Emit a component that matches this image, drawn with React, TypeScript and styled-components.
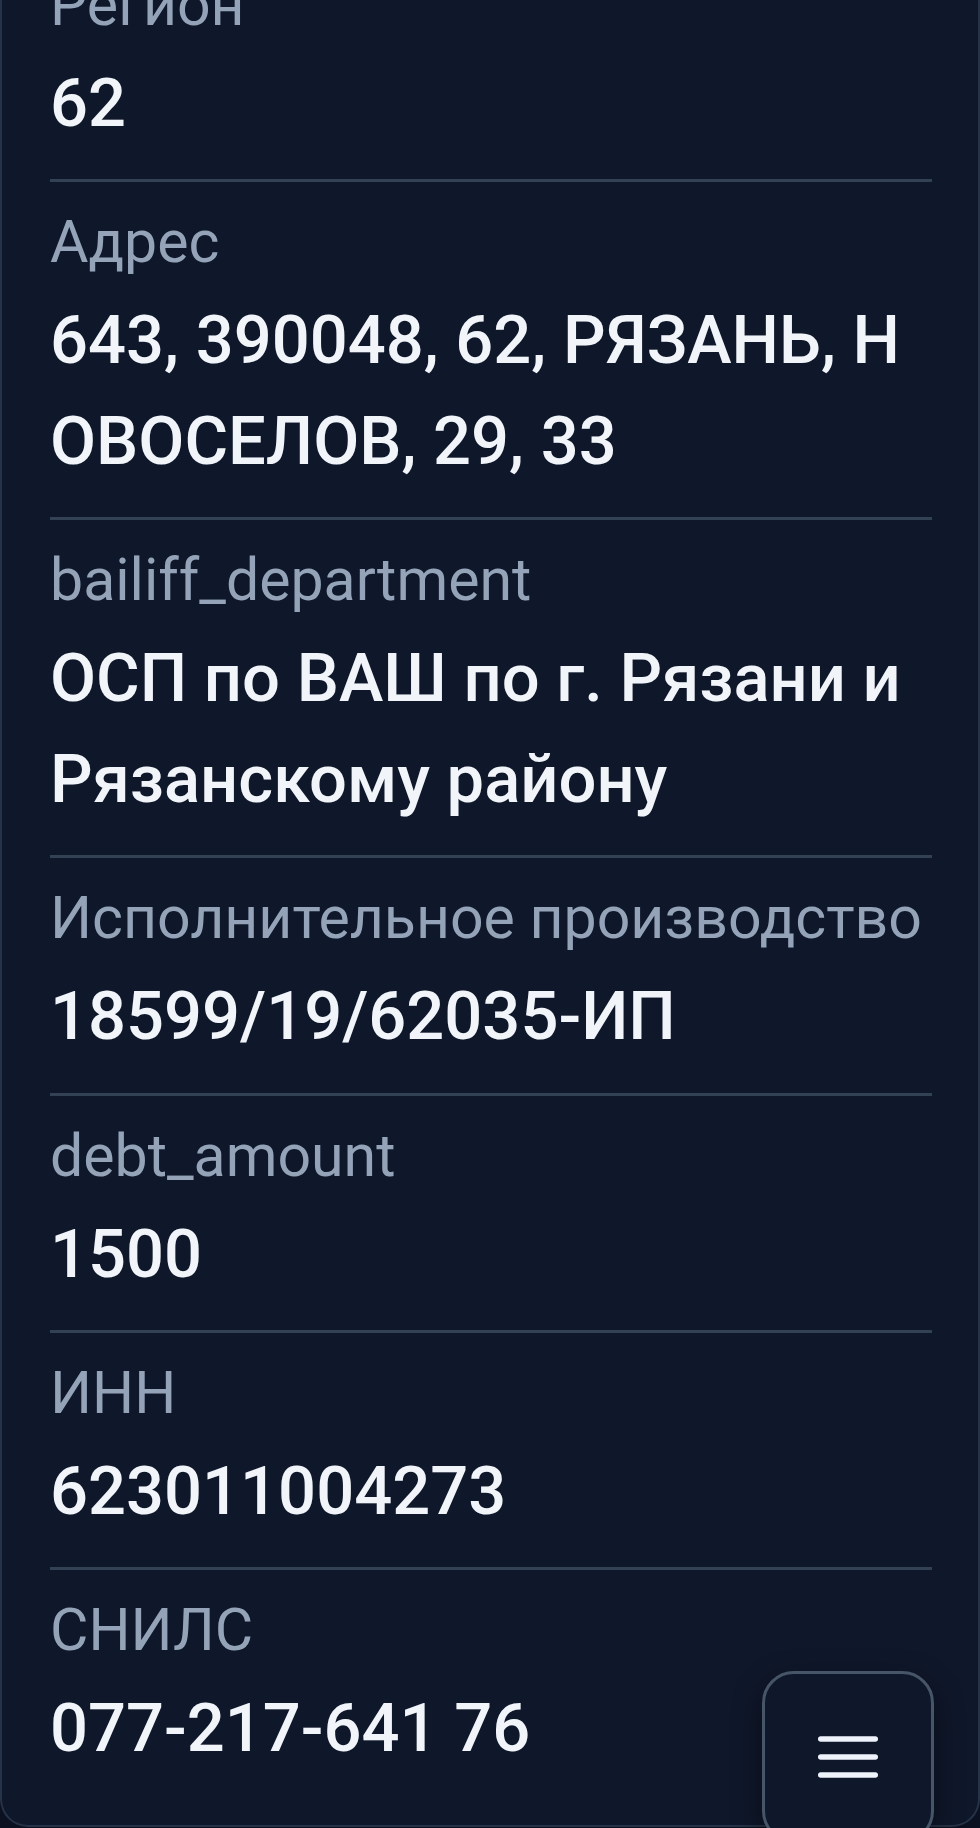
import React from "react";
import styled, { createGlobalStyle } from "styled-components";

const GlobalStyle = createGlobalStyle`
  html, body {
    margin: 0;
    padding: 0;
    background: #0b1120;
    font-family: Roboto, "Noto Sans", "Liberation Sans", sans-serif;
    -webkit-font-smoothing: antialiased;
  }
`;

const Viewport = styled.div`
  height: 100vh;
  overflow: hidden;
`;

const Card = styled.div`
  margin-top: -55px;
  background: #0f172a;
  border: 2px solid #253247;
  border-top: none;
  border-radius: 0 0 28px 28px;
  padding: 0 46px 21px 48px;
`;

const Field = styled.div`
  padding: 18px 0 25px;
  border-bottom: 3px solid #334155;

  &:last-child {
    border-bottom: none;
  }
`;

const Label = styled.div`
  font-size: 59px;
  line-height: 84px;
  font-weight: 400;
  color: #94a3b8;
  white-space: nowrap;
`;

const Value = styled.div`
  margin-top: 6px;
  font-size: 66.9px;
  line-height: 101.1px;
  font-weight: 500;
  color: #f1f5f9;
  word-break: break-all;
`;

const MenuButton = styled.button`
  position: fixed;
  right: 46px;
  bottom: -15px;
  width: 172px;
  height: 172px;
  display: flex;
  align-items: center;
  justify-content: center;
  padding: 0;
  background: #0f172a;
  border: 3px solid #475569;
  border-radius: 32px;
  box-shadow: 0 10px 30px rgba(0, 0, 0, 0.45);
  cursor: pointer;
`;

const fields = [
  { label: "Регион", value: "62" },
  { label: "Адрес", value: "643, 390048, 62, РЯЗАНЬ, НОВОСЕЛОВ, 29, 33" },
  {
    label: "bailiff_department",
    value: "ОСП по ВАШ по г. Рязани и Рязанскому району",
  },
  { label: "Исполнительное производство", value: "18599/19/62035-ИП" },
  { label: "debt_amount", value: "1500" },
  { label: "ИНН", value: "623011004273" },
  { label: "СНИЛС", value: "077-217-641 76" },
];

const HamburgerIcon = () => (
  <svg width="60" height="42" viewBox="0 0 60 42" fill="none">
    {[3, 21, 39].map((y) => (
      <line
        key={y}
        x1="2.75"
        x2="57.25"
        y1={y}
        y2={y}
        stroke="#eef2fb"
        strokeWidth="5.5"
        strokeLinecap="round"
      />
    ))}
  </svg>
);

export default function App() {
  return (
    <>
      <GlobalStyle />
      <Viewport>
        <Card>
          {fields.map(({ label, value }) => (
            <Field key={label}>
              <Label>{label}</Label>
              <Value>{value}</Value>
            </Field>
          ))}
        </Card>
      </Viewport>
      <MenuButton aria-label="Меню">
        <HamburgerIcon />
      </MenuButton>
    </>
  );
}
